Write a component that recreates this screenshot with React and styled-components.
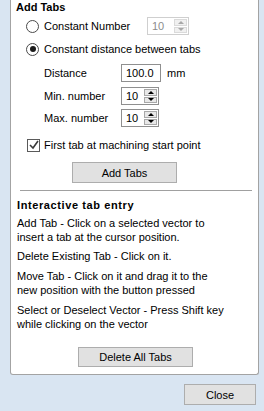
import React from "react";
import styled, { createGlobalStyle } from "styled-components";

const Global = createGlobalStyle`
  html, body { margin: 0; padding: 0; }
  body {
    background: #d9e5f2;
    font-family: "Liberation Sans", Arial, sans-serif;
    font-size: 11px;
    color: #000;
  }
`;

const Page = styled.div`
  width: 264px;
  height: 411px;
  display: flex;
  flex-direction: column;
  background: #d9e5f2;
`;

const Panel = styled.div`
  margin-left: 10px;
  width: 249px;
  height: 375px;
  background: #fff;
  border: 1px solid #a3a3a3;
  border-top: none;
  border-radius: 0 0 3px 3px;
  padding-left: 5px;
  display: flex;
  flex-direction: column;
  box-sizing: border-box;
`;

const Title = styled.div`
  height: 14px;
  line-height: 14px;
  font-weight: bold;
  font-size: 11px;
  letter-spacing: ${(p) => p.$ls || 0}px;
  margin-top: ${(p) => p.$mt || 0}px;
  padding-left: ${(p) => p.$pl || 0}px;
`;

const Row = styled.div`
  display: flex;
  align-items: center;
  height: 18px;
  margin-top: ${(p) => p.$mt || 0}px;
  padding-left: ${(p) => p.$pl || 0}px;
`;

const RadioCircle = styled.span`
  width: 11px;
  height: 11px;
  border: 1px solid #4a4a4a;
  border-radius: 50%;
  background: #fff;
  display: flex;
  align-items: center;
  justify-content: center;
  flex: none;
  &::after {
    content: "";
    display: ${(p) => (p.$checked ? "block" : "none")};
    width: 6px;
    height: 6px;
    border-radius: 50%;
    background: #1a1a1a;
  }
`;

const Label = styled.span`
  margin-left: ${(p) => p.$ml || 0}px;
  width: ${(p) => (p.$w ? p.$w + "px" : "auto")};
  flex: none;
  white-space: nowrap;
  line-height: 14px;
`;

const Box = styled.div`
  display: flex;
  align-items: stretch;
  box-sizing: border-box;
  height: 18px;
  width: ${(p) => p.$w}px;
  margin-left: ${(p) => p.$ml || 0}px;
  border: 1px solid ${(p) => (p.$disabled ? "#cfcfcf" : "#8f8f8f")};
  background: #fff;
  color: ${(p) => (p.$disabled ? "#8c8c8c" : "#000")};
  flex: none;
`;

const BoxText = styled.span`
  flex: 1;
  padding-left: 4px;
  line-height: 16px;
`;

const Arrows = styled.div`
  width: 13px;
  margin: 1px 1px 1px 0;
  display: flex;
  flex-direction: column;
  gap: 1px;
`;

const ArrowHalf = styled.div`
  flex: 1;
  background: ${(p) => (p.$disabled ? "#f0f0f0" : "#e8e8e8")};
  border: 1px solid ${(p) => (p.$disabled ? "#dadada" : "#a8a8a8")};
  display: flex;
  align-items: center;
  justify-content: center;
  &::after {
    content: "";
    width: 0;
    height: 0;
    border-left: 3px solid transparent;
    border-right: 3px solid transparent;
    ${(p) => (p.$down ? "border-top" : "border-bottom")}: 3px solid
      ${(p) => (p.$disabled ? "#a8a8a8" : "#000")};
  }
`;

const CheckBox = styled.span`
  width: 11px;
  height: 11px;
  border: 1px solid #5a5a5a;
  background: #fff;
  display: flex;
  align-items: center;
  justify-content: center;
  flex: none;
`;

const Button = styled.div`
  box-sizing: border-box;
  height: ${(p) => p.$h || 21}px;
  width: ${(p) => p.$w}px;
  margin-top: ${(p) => p.$mt || 0}px;
  margin-left: ${(p) => p.$ml || 0}px;
  background: #e1e1e1;
  border: 1px solid #adadad;
  display: flex;
  align-items: center;
  justify-content: center;
  flex: none;
`;

const Separator = styled.div`
  height: 1px;
  background: #a0a0a0;
  width: 232px;
  margin-left: 4px;
  margin-top: ${(p) => p.$mt || 0}px;
`;

const Para = styled.div`
  line-height: 14px;
  padding-left: 1px;
  margin-top: ${(p) => p.$mt || 0}px;
  white-space: nowrap;
`;

const Footer = styled.div`
  display: flex;
  justify-content: flex-end;
  padding-right: 8px;
  margin-top: 9px;
`;

function Spinner({ value, width, ml, disabled }) {
  return (
    <Box $w={width} $ml={ml} $disabled={disabled}>
      <BoxText>{value}</BoxText>
      <Arrows>
        <ArrowHalf $disabled={disabled} />
        <ArrowHalf $down $disabled={disabled} />
      </Arrows>
    </Box>
  );
}

export default function App() {
  return (
    <>
      <Global />
      <Page>
        <Panel>
          <Title $mt={0}>Add Tabs</Title>
          <Row $mt={3} $pl={10}>
            <RadioCircle />
            <Label $ml={5} $w={103}>Constant Number</Label>
            <Spinner value="10" width={42} disabled />
          </Row>
          <Row $mt={5} $pl={10}>
            <RadioCircle $checked />
            <Label $ml={5}>Constant distance between tabs</Label>
          </Row>
          <Row $mt={6} $pl={28}>
            <Label $w={77}>Distance</Label>
            <Box $w={40}>
              <BoxText>100.0</BoxText>
            </Box>
            <Label $ml={6}>mm</Label>
          </Row>
          <Row $mt={5} $pl={28}>
            <Label $w={77}>Min. number</Label>
            <Spinner value="10" width={38} />
          </Row>
          <Row $mt={4} $pl={28}>
            <Label $w={77}>Max. number</Label>
            <Spinner value="10" width={38} />
          </Row>
          <Row $mt={9} $pl={11}>
            <CheckBox>
              <svg width="10" height="10" viewBox="0 0 10 10">
                <path d="M1 5 L4 8 L9 1" stroke="#3a3a3a" strokeWidth="1.6" fill="none" />
              </svg>
            </CheckBox>
            <Label $ml={4}>First tab at machining start point</Label>
          </Row>
          <Button $w={105} $mt={8} $ml={56}>Add Tabs</Button>
          <Separator $mt={7} />
          <Title $mt={7} $ls={0.6} $pl={1}>Interactive tab entry</Title>
          <Para $mt={4}>
            Add Tab - Click on a selected vector to
            <br />
            insert a tab at the cursor position.
          </Para>
          <Para $mt={5}>Delete Existing Tab - Click on it.</Para>
          <Para $mt={6}>
            Move Tab - Click on it and drag it to the
            <br />
            new position with the button pressed
          </Para>
          <Para $mt={6}>
            Select or Deselect Vector - Press Shift key
            <br />
            while clicking on the vector
          </Para>
          <Button $w={115} $h={20} $mt={16} $ml={62}>Delete All Tabs</Button>
        </Panel>
        <Footer>
          <Button $w={72}>Close</Button>
        </Footer>
      </Page>
    </>
  );
}
